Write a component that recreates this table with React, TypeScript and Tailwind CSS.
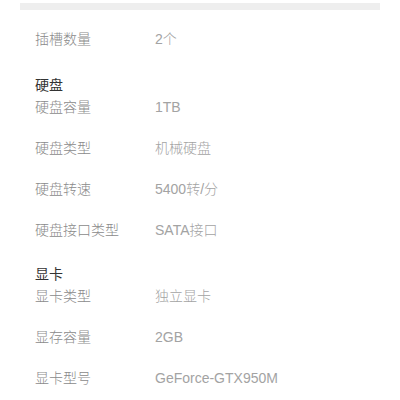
const groups = [
  {
    title: "硬盘",
    rows: [
      ["硬盘容量", "1TB"],
      ["硬盘类型", "机械硬盘"],
      ["硬盘转速", "5400转/分"],
      ["硬盘接口类型", "SATA接口"],
    ],
  },
  {
    title: "显卡",
    rows: [
      ["显卡类型", "独立显卡"],
      ["显存容量", "2GB"],
      ["显卡型号", "GeForce-GTX950M"],
    ],
  },
];

function Row({ label, value }: { label: string; value: string }) {
  return (
    <div className="flex h-[22px] items-center leading-[22px]">
      <span className="w-[120px] text-[#8a8a8a]">{label}</span>
      <span className="text-[#a3a3a3]">{value}</span>
    </div>
  );
}

export default function App() {
  return (
    <div
      className="h-[400px] w-[400px] overflow-hidden bg-white pt-[3px] text-[14px] font-light"
      style={{ fontFamily: '"Liberation Sans", "Noto Sans CJK SC", sans-serif' }}
    >
      <div className="mx-5 h-[7px] bg-[#eeeeee]" />
      <div className="flex flex-col pl-[35px] pt-[18px]">
        <Row label="插槽数量" value="2个" />
        {groups.map((g, i) => (
          <div key={g.title} className={i === 0 ? "mt-[24px]" : "mt-[22px]"}>
            <div className="h-[22px] leading-[22px] font-normal text-[#333333]">{g.title}</div>
            <div className="flex flex-col gap-[19px]">
              {g.rows.map(([l, v]) => (
                <Row key={l} label={l} value={v} />
              ))}
            </div>
          </div>
        ))}
      </div>
    </div>
  );
}
